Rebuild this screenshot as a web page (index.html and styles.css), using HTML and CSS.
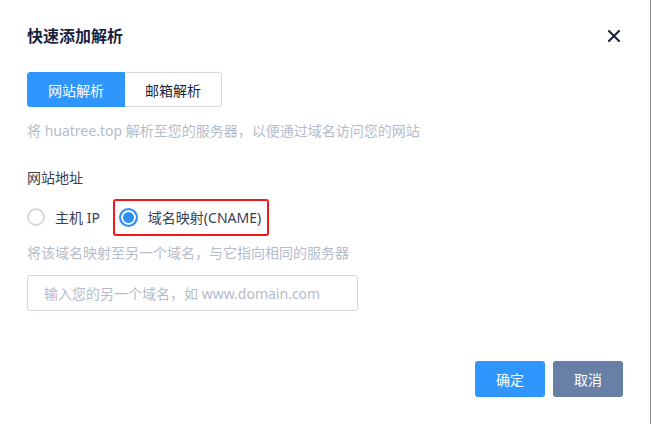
FILE: index.html
```html
<!DOCTYPE html>
<html lang="zh">
<head>
<meta charset="utf-8">
<link rel="stylesheet" href="styles.css">
</head>
<body>
<div class="dialog">
  <div class="header">
    <h1 class="title">快速添加解析</h1>
    <svg class="close" width="12" height="12" viewBox="0 0 12 12"><path d="M1 1L11 11M11 1L1 11" stroke="#1b1f3d" stroke-width="2" stroke-linecap="round"/></svg>
  </div>
  <div class="tabs">
    <div class="tab active">网站解析</div>
    <div class="tab">邮箱解析</div>
  </div>
  <p class="desc">将 huatree.top 解析至您的服务器，以便通过域名访问您的网站</p>
  <div class="label">网站地址</div>
  <div class="radios">
    <label class="radio"><span class="dot"></span><span>主机 IP</span></label>
    <label class="radio marked"><span class="dot checked"></span><span>域名映射(CNAME)</span></label>
  </div>
  <p class="hint">将该域名映射至另一个域名，与它指向相同的服务器</p>
  <div class="input">输入您的另一个域名，如 www.domain.com</div>
  <div class="footer">
    <button class="btn primary">确定</button>
    <button class="btn cancel">取消</button>
  </div>
</div>
</body>
</html>
```
FILE: styles.css
```css
html, body {
  margin: 0;
  padding: 0;
  background: #fff;
}
body {
  font-family: "Noto Sans", "Noto Sans CJK SC", sans-serif;
  font-size: 14px;
  width: 652px;
  height: 424px;
  overflow: hidden;
}
.dialog {
  box-sizing: border-box;
  width: 651px;
  height: 424px;
  padding: 24px 27px 0 27px;
  border-right: 1px solid #8c8c8c;
  background: #fff;
}
.header {
  display: flex;
  align-items: center;
  justify-content: space-between;
  height: 24px;
}
.title {
  margin: 0;
  font-size: 16px;
  font-weight: 700;
  line-height: 24px;
  color: #1b1f3d;
}
.close {
  margin-right: 3px;
}
.tabs {
  display: flex;
  margin-top: 24px;
  height: 35px;
}
.tab {
  box-sizing: border-box;
  width: 97px;
  height: 35px;
  display: flex;
  align-items: center;
  justify-content: center;
  font-size: 14px;
  color: #1b1f3d;
  border: 1px solid #d6dbe5;
  border-left: none;
  border-radius: 0 3px 3px 0;
  background: #fff;
}
.tab.active {
  width: 98px;
  background: #2f96fd;
  color: #fff;
  border: 1px solid #2f96fd;
  border-radius: 3px 0 0 3px;
}
.desc {
  margin: 14px 0 0;
  line-height: 20px;
  color: #b4bccb;
}
.label {
  margin-top: 27px;
  line-height: 20px;
  color: #3b4052;
}
.radios {
  display: flex;
  align-items: center;
  margin-top: 11px;
  height: 36px;
}
.radio {
  display: flex;
  align-items: center;
  gap: 10px;
  color: #3b4052;
}
.radio.marked {
  box-sizing: border-box;
  height: 37px;
  margin-left: 13px;
  padding: 0 6px 0 4px;
  border: 2px solid #f5161a;
  border-radius: 3px;
}
.dot {
  box-sizing: border-box;
  width: 18px;
  height: 18px;
  border-radius: 50%;
  border: 2px solid #d3d8e1;
  background: #fff;
}
.dot.checked {
  width: 19px;
  height: 19px;
  border: 2.5px solid #2f8ff5;
  box-shadow: inset 0 0 0 2px #fff;
  background: #2f8ff5;
}
.hint {
  margin: 8px 0 0;
  line-height: 20px;
  color: #b4bccb;
}
.input {
  box-sizing: border-box;
  margin-top: 12px;
  width: 331px;
  height: 36px;
  padding-left: 16px;
  display: flex;
  align-items: center;
  border: 1px solid #d3d9e3;
  border-radius: 3px;
  color: #b4bccb;
}
.footer {
  display: flex;
  justify-content: flex-end;
  gap: 8px;
  margin-top: 50px;
}
.btn {
  width: 70px;
  height: 36px;
  border: none;
  border-radius: 3px;
  font-family: inherit;
  font-size: 14px;
  color: #fff;
  padding: 0;
}
.btn.primary {
  background: #2f96fd;
}
.btn.cancel {
  background: #6880a5;
}
```
